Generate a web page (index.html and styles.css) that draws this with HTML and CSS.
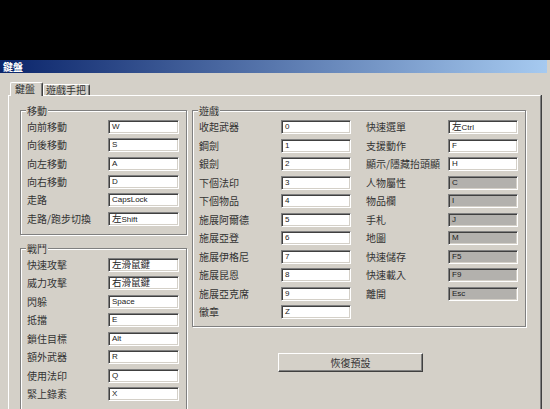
FILE: index.html
```html
<!DOCTYPE html>
<html lang="zh-Hant">
<head>
<meta charset="utf-8">
<title>鍵盤</title>
<link rel="stylesheet" href="styles.css">
</head>
<body>
<div class="screen">
  <div class="window">
    <div class="titlebar"><span class="title">鍵盤</span></div>
    <div class="client">
      <div class="tabs">
        <div class="tab active">鍵盤</div>
        <div class="tab">遊戲手把</div>
      </div>
      <div class="panel">
        <div class="col-left">
          <fieldset class="group g-left">
            <legend>移動</legend>
            <div class="rows rows-move">
              <div class="row"><span class="label">向前移動</span><span class="field">W</span></div>
              <div class="row"><span class="label">向後移動</span><span class="field">S</span></div>
              <div class="row"><span class="label">向左移動</span><span class="field">A</span></div>
              <div class="row"><span class="label">向右移動</span><span class="field">D</span></div>
              <div class="row"><span class="label">走路</span><span class="field">CapsLock</span></div>
              <div class="row"><span class="label">走路/跑步切換</span><span class="field"><span class="cj">左</span>Shift</span></div>
            </div>
          </fieldset>
          <fieldset class="group g-left g-combat">
            <legend>戰鬥</legend>
            <div class="rows rows-combat">
              <div class="row"><span class="label">快速攻擊</span><span class="field"><span class="cj">左滑鼠鍵</span></span></div>
              <div class="row"><span class="label">威力攻擊</span><span class="field"><span class="cj">右滑鼠鍵</span></span></div>
              <div class="row"><span class="label">閃躲</span><span class="field">Space</span></div>
              <div class="row"><span class="label">抵擋</span><span class="field">E</span></div>
              <div class="row"><span class="label">鎖住目標</span><span class="field">Alt</span></div>
              <div class="row"><span class="label">額外武器</span><span class="field">R</span></div>
              <div class="row"><span class="label">使用法印</span><span class="field">Q</span></div>
              <div class="row"><span class="label">緊上錄素</span><span class="field">X</span></div>
            </div>
          </fieldset>
        </div>
        <div class="col-right">
          <fieldset class="group g-game">
            <legend>遊戲</legend>
            <div class="game-cols">
              <div class="rows rows-game">
                <div class="row"><span class="label">收起武器</span><span class="field">0</span></div>
                <div class="row"><span class="label">鋼劍</span><span class="field">1</span></div>
                <div class="row"><span class="label">銀劍</span><span class="field">2</span></div>
                <div class="row"><span class="label">下個法印</span><span class="field">3</span></div>
                <div class="row"><span class="label">下個物品</span><span class="field">4</span></div>
                <div class="row"><span class="label">施展阿爾德</span><span class="field">5</span></div>
                <div class="row"><span class="label">施展亞登</span><span class="field">6</span></div>
                <div class="row"><span class="label">施展伊格尼</span><span class="field">7</span></div>
                <div class="row"><span class="label">施展昆恩</span><span class="field">8</span></div>
                <div class="row"><span class="label">施展亞克席</span><span class="field">9</span></div>
                <div class="row"><span class="label">徽章</span><span class="field">Z</span></div>
              </div>
              <div class="rows rows-game">
                <div class="row"><span class="label">快速選單</span><span class="field"><span class="cj">左</span>Ctrl</span></div>
                <div class="row"><span class="label">支援動作</span><span class="field">F</span></div>
                <div class="row"><span class="label">顯示/隱藏抬頭顯</span><span class="field">H</span></div>
                <div class="row"><span class="label">人物屬性</span><span class="field dis">C</span></div>
                <div class="row"><span class="label">物品欄</span><span class="field dis">I</span></div>
                <div class="row"><span class="label">手札</span><span class="field dis">J</span></div>
                <div class="row"><span class="label">地圖</span><span class="field dis">M</span></div>
                <div class="row"><span class="label">快速儲存</span><span class="field dis">F5</span></div>
                <div class="row"><span class="label">快速載入</span><span class="field dis">F9</span></div>
                <div class="row"><span class="label">離開</span><span class="field dis">Esc</span></div>
              </div>
            </div>
          </fieldset>
          <button class="btn" type="button">恢復預設</button>
        </div>
      </div>
    </div>
  </div>
</div>
</body>
</html>
```

FILE: styles.css
```css
* { box-sizing: border-box; }
html, body { margin: 0; padding: 0; }
body {
  background: #000;
  width: 550px;
  height: 409px;
  overflow: hidden;
  font-family: "Noto Sans CJK TC", "Noto Sans CJK SC", sans-serif;
  font-size: 10px;
  color: #333;
}
.screen { padding-top: 60px; height: 409px; }
.window { background: #d4d0c8; height: 349px; overflow: hidden; }
.titlebar {
  width: 547px;
  height: 13px;
  background: linear-gradient(to right, #0a246a, #a6caf0);
  display: flex;
  align-items: center;
  padding-left: 3px;
}
.title { color: #fff; font-weight: bold; font-size: 10px; line-height: 12px; }
.client { padding: 9px 0 0 8px; }
.tabs {
  display: flex;
  align-items: flex-end;
  height: 13px;
  margin-left: 2px;
}
.tab {
  height: 11px;
  line-height: 10px;
  border-top: 1px solid #fff;
  border-left: 1px solid #fff;
  border-right: 1px solid #404040;
  box-shadow: inset -1px 0 0 #808080;
  border-radius: 2px 2px 0 0;
  padding: 0 3px 0 2px;
  white-space: nowrap;
  background: #d4d0c8;
}
.tab.active {
  position: relative;
  z-index: 1;
  height: 14px;
  margin-bottom: -1px;
  line-height: 12px;
  width: 33px;
  padding: 0 0 0 4px;
}
.panel {
  display: flex;
  gap: 5px;
  width: 533px;
  height: 400px;
  border-top: 1px solid #fff;
  border-left: 1px solid #fff;
  border-right: 1px solid #808080;
  box-shadow: 1px 0 0 #404040;
  padding: 9px 0 0 11px;
}
.col-left { display: flex; flex-direction: column; }
.col-right { display: flex; flex-direction: column; align-items: flex-start; }
.group {
  margin: 0;
  min-width: 0;
  padding: 4px 7px 8px 6px;
  border: 1px solid #808080;
  box-shadow: inset 1px 1px 0 #fff, 1px 1px 0 #fff;
}
.group legend {
  padding: 0 1px;
  margin-left: -1px;
  height: 11px;
  line-height: 11px;
  background: #d4d0c8;
}
.g-left { width: 167px; }
.g-combat { margin-top: 8px; }
.g-game { width: 334px; padding-bottom: 7px; }
.rows { display: flex; flex-direction: column; }
.rows-move { gap: 4.33px; }
.rows-combat { gap: 4.5px; }
.rows-game { gap: 4.5px; }
.game-cols { display: flex; gap: 15px; }
.row { display: flex; align-items: center; height: 14px; }
.label { width: 81px; white-space: nowrap; line-height: 14px; }
.rows-game .label { width: 82px; }
.field {
  display: block;
  width: 71px;
  height: 14px;
  background: #fff;
  border-top: 1px solid #808080;
  border-left: 1px solid #808080;
  border-right: 1px solid #fff;
  border-bottom: 1px solid #fff;
  box-shadow: inset 1px 1px 0 #404040, inset -1px -1px 0 #d4d0c8;
  font-family: "Liberation Sans", "Noto Sans CJK TC", sans-serif;
  font-size: 8px;
  line-height: 11px;
  padding-left: 3px;
  color: #222;
  white-space: nowrap;
}
.rows-game .field { width: 70px; }
.field.dis { background: #b3b1ad; }
.cj { font-family: "Noto Sans CJK TC", sans-serif; font-size: 9.5px; }
.btn {
  margin: 26px 0 0 86px;
  width: 145px;
  height: 19px;
  padding: 0;
  background: #d4d0c8;
  border-top: 1px solid #fff;
  border-left: 1px solid #fff;
  border-right: 1px solid #404040;
  border-bottom: 1px solid #404040;
  border-radius: 0;
  box-shadow: inset -1px -1px 0 #808080;
  font-family: "Noto Sans CJK TC", sans-serif;
  font-size: 10px;
  line-height: 16px;
  color: #333;
}
```
